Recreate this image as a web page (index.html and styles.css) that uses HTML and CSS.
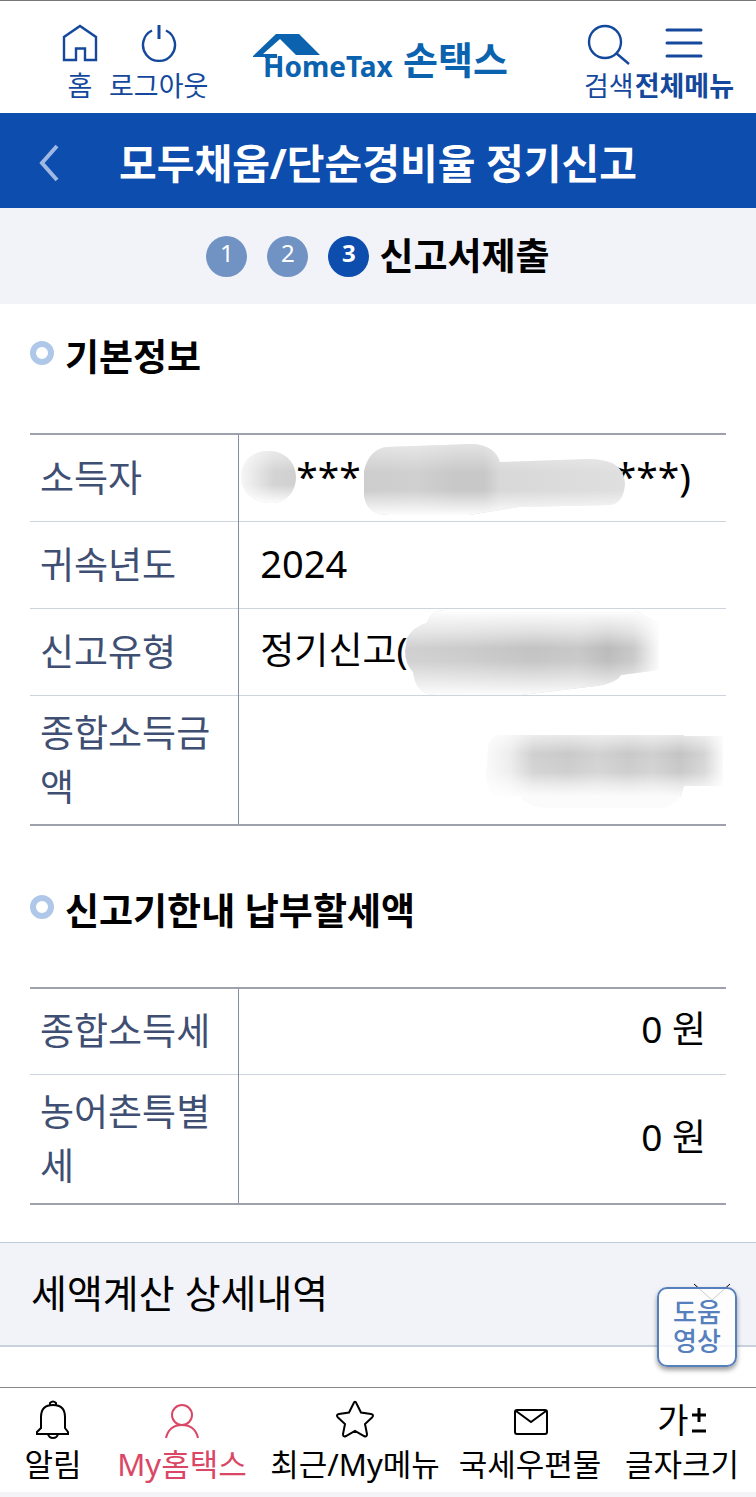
FILE: index.html
```html
<!DOCTYPE html>
<html lang="ko">
<head>
    <meta charset="UTF-8">
    <meta name="viewport" content="width=device-width, initial-scale=1.0">
    <title>손택스</title>
    <link rel="stylesheet" href="styles.css">
</head>
<body>
    <header class="top">
        <button class="top-btn">
            <svg width="38" height="38" viewBox="0 0 38 38"><path d="M3 36V13L19 2l16 11v23H24V24.500h-9V36z"/></svg>
            <span>홈</span>
        </button>
        <button class="top-btn">
            <svg width="38" height="38" viewBox="0 0 38 38"><path d="M12 6.500a16 16 0 1 0 14 0"/><path d="M19 1v14" stroke-width="3"/></svg>
            <span>로그아웃</span>
        </button>
        <a class="logo" href="#">
            <svg width="262" height="56" viewBox="0 0 262 56">
                <path d="M0 23L23 1H46L67 22H43L27 6 10 21H24V25H12V24H0z"/>
                <text class="logo-en" x="10" y="44">HomeTax</text>
                <text class="logo-ko" x="150" y="41">손택스</text>
            </svg>
        </a>
        <div class="top-right">
            <button class="top-btn search">
                <svg width="44" height="42" viewBox="0 0 44 42"><circle cx="18" cy="18" r="16"/><path d="M29 29l13 11"/></svg>
                <span>검색</span>
            </button>
            <button class="top-btn all">
                <svg width="38" height="38" viewBox="0 0 38 38"><path d="M2 6h34M2 19h34M2 32h34" stroke-width="3" stroke-linecap="round"/></svg>
                <span>전체메뉴</span>
            </button>
        </div>
    </header>

    <div class="title-bar">
        <button class="back" aria-label="이전"><svg width="24" height="40" viewBox="0 0 24 40"><path d="M21 3L6 20l15 17"/></svg></button>
        <h1>모두채움/단순경비율 정기신고</h1>
    </div>

    <div class="steps">
        <span class="step">1</span>
        <span class="step">2</span>
        <span class="step on">3</span>
        <strong>신고서제출</strong>
    </div>

    <main>
        <section>
            <h2>기본정보</h2>
            <table>
                <tr>
                    <th scope="row">소득자</th>
                    <td class="masked">
                        <div class="mask-line"><span>***</span><span>***)</span></div>
                        <svg class="smudge" width="390" height="76" viewBox="0 0 390 76">
                            <defs>
                                <linearGradient id="g1"><stop offset="0" stop-color="#f6f6f6"/><stop offset=".6" stop-color="#d4d4d4"/><stop offset="1" stop-color="#d0d0d0"/></linearGradient>
                                <linearGradient id="g2"><stop offset="0" stop-color="#cdcdcd"/><stop offset=".2" stop-color="#d0d0d0"/><stop offset=".35" stop-color="#c8c8c8"/><stop offset=".46" stop-color="#c8c8c8"/><stop offset=".52" stop-color="#d8d8d8"/><stop offset="1" stop-color="#dfdfdf"/></linearGradient>
                                <linearGradient id="fade" x2="0" y2="1"><stop offset="0" stop-color="#fff" stop-opacity=".5"/><stop offset=".4" stop-color="#fff" stop-opacity="0"/><stop offset=".65" stop-color="#fff" stop-opacity="0"/><stop offset="1" stop-color="#fff" stop-opacity=".95"/></linearGradient>
                            </defs>
                            <path fill="url(#g1)" d="M2 32C3 15 17 7 31 8 47 9 57 20 57 34 57 50 46 60 32 60 15 60 1 50 2 32z"/>
                            <path fill="url(#fade)" d="M2 32C3 15 17 7 31 8 47 9 57 20 57 34 57 50 46 60 32 60 15 60 1 50 2 32z"/>
                            <path fill="url(#g2)" d="M125 28Q130 6 148 4L235 1Q256 3 261 19L350 16Q386 16 386 42 384 61 370 62L280 64 230 72H150Q127 72 125 52z"/>
                            <path fill="url(#fade)" d="M125 28Q130 6 148 4L235 1Q256 3 261 19L350 16Q386 16 386 42 384 61 370 62L280 64 230 72H150Q127 72 125 52z"/>
                        </svg>
                    </td>
                </tr>
                <tr>
                    <th scope="row">귀속년도</th>
                    <td class="year">2024</td>
                </tr>
                <tr>
                    <th scope="row">신고유형</th>
                    <td class="masked">
                        정기신고(
                        <svg class="smudge type" width="260" height="92" viewBox="0 0 260 92">
                            <defs>
                                <linearGradient id="g3"><stop offset="0" stop-color="#d0d0d0"/><stop offset=".25" stop-color="#cbcbcb"/><stop offset=".5" stop-color="#c3c3c3"/><stop offset=".68" stop-color="#c8c8c8"/><stop offset=".8" stop-color="#bbb"/><stop offset=".9" stop-color="#c9c9c9"/><stop offset="1" stop-color="#fbfbfb"/></linearGradient>
                                <linearGradient id="fade2" x2="0" y2="1"><stop offset="0" stop-color="#fff"/><stop offset=".25" stop-color="#fff" stop-opacity=".5"/><stop offset=".45" stop-color="#fff" stop-opacity="0"/><stop offset=".6" stop-color="#fff" stop-opacity=".05"/><stop offset="1" stop-color="#fff" stop-opacity=".95"/></linearGradient>
                            </defs>
                            <path fill="url(#g3)" d="M6 32Q12 21 26 17 30 5 42 4H235Q246 12 258 17V64L220 69Q215 77 195 80L120 89H35Q15 89 12 66 4 58 4 45z"/>
                            <path fill="url(#fade2)" d="M6 32Q12 21 26 17 30 5 42 4H235Q246 12 258 17V64L220 69Q215 77 195 80L120 89H35Q15 89 12 66 4 58 4 45z"/>
                        </svg>
                    </td>
                </tr>
                <tr>
                    <th scope="row">종합소득금액</th>
                    <td class="masked">
                        <svg class="smudge amount" width="244" height="76" viewBox="0 0 244 76">
                            <defs>
                                <linearGradient id="g4"><stop offset="0" stop-color="#fafafa"/><stop offset=".1" stop-color="#ededed"/><stop offset=".2" stop-color="#d0d0d0"/><stop offset=".35" stop-color="#cacaca"/><stop offset=".47" stop-color="#d2d2d2"/><stop offset=".6" stop-color="#c9c9c9"/><stop offset=".7" stop-color="#d0d0d0"/><stop offset=".82" stop-color="#c4c4c4"/><stop offset=".92" stop-color="#d5d5d5"/><stop offset="1" stop-color="#fafafa"/></linearGradient>
                                <linearGradient id="fade3" x2="0" y2="1"><stop offset="0" stop-color="#fff" stop-opacity=".6"/><stop offset=".3" stop-color="#fff" stop-opacity="0"/><stop offset=".6" stop-color="#fff" stop-opacity=".1"/><stop offset=".8" stop-color="#fff" stop-opacity=".6"/><stop offset="1" stop-color="#fff" stop-opacity=".95"/></linearGradient>
                            </defs>
                            <path fill="#fbfbfb" d="M40 60H200Q192 75 175 75H65Q50 75 40 66z"/>
                            <path fill="url(#g4)" d="M6 14Q8 2 20 2H202V3H241V53H202L198 64H16Q6 60 4 44z"/>
                            <path fill="url(#fade3)" d="M6 14Q8 2 20 2H202V3H241V53H202L198 64H16Q6 60 4 44z"/>
                        </svg>
                    </td>
                </tr>
            </table>
        </section>

        <section>
            <h2>신고기한내 납부할세액</h2>
            <table>
                <tr>
                    <th scope="row">종합소득세</th>
                    <td class="won">0 원</td>
                </tr>
                <tr>
                    <th scope="row">농어촌특별세</th>
                    <td class="won">0 원</td>
                </tr>
            </table>
        </section>
    </main>

    <div class="detail">
        <button class="detail-btn">
            세액계산 상세내역
            <svg width="38" height="20" viewBox="0 0 38 20"><path d="M1 1l18 16L37 1"/></svg>
        </button>
        <button class="help">도움<br>영상</button>
    </div>

    <nav class="bottom">
        <a href="#">
            <svg width="40" height="40" viewBox="0 0 40 40"><path d="M8 28V17Q8 5 20 5T32 17V28l3 4v2H4v-2zM17 5V3q3-3 6 0v2M15 34q1 4 5 4t5-4"/></svg>
            알림
        </a>
        <a class="on" href="#">
            <svg width="40" height="40" viewBox="0 0 40 40"><circle cx="20" cy="15" r="10"/><path d="M4 38Q7 25 20 25T36 38"/></svg>
            My홈택스
        </a>
        <a href="#">
            <svg width="40" height="40" viewBox="0 0 40 40"><path d="M18.500 3.500Q20 0 21.500 3.500L26 12.500 36 14Q39.500 15 37 17.500L30 24 32 34Q32 37.500 29 36L20 31 11 36Q8 37.500 8 34L10 24 3 17.500Q.5 15 4 14L14 12.500z"/></svg>
            최근/My메뉴
        </a>
        <a href="#">
            <svg width="40" height="40" viewBox="0 0 40 40"><rect x="5" y="10" width="32" height="24" rx="2"/><path d="M6 11l15 11 15-11"/></svg>
            국세우편물
        </a>
        <a href="#">
            <span class="font-size">가<svg width="16" height="28" viewBox="0 0 16 28"><path d="M1 9h14M8 2v14M1 25h14" stroke-width="3"/></svg></span>
            글자크기
        </a>
    </nav>
</body>
</html>
```
FILE: styles.css
```css
*,
*::before {
    box-sizing: border-box;
}

body {
    margin: 0;
    font-family: "Noto Sans", "Noto Sans CJK KR", sans-serif;
    font-size: 37px;
    line-height: 54px;
    color: #000;
    background: #fff;
}

button {
    padding: 0;
    border: none;
    background: none;
    font: inherit;
    color: inherit;
    cursor: pointer;
}

a {
    color: inherit;
    text-decoration: none;
}

svg {
    display: block;
    fill: none;
    stroke: currentColor;
    stroke-width: 2;
}

h1,
h2 {
    margin: 0;
}

/* header */
.top {
    display: flex;
    align-items: flex-start;
    gap: 10px;
    height: 113px;
    padding: 23px 22px 0 61px;
    border-top: 1px solid #777;
    color: #14489c;
}

.top-btn {
    display: flex;
    flex-direction: column;
    align-items: center;
    font-size: 27px;
    line-height: 40px;
    white-space: nowrap;
}

.top-btn svg {
    height: 42px;
    padding-bottom: 4px;
    stroke-width: 2.4;
}

.search svg {
    padding-bottom: 0;
}

.logo {
    margin: 9px 0 0 35px;
}

.logo svg {
    fill: #0b62ae;
    stroke: none;
}

.logo-en {
    font-size: 28px;
    font-weight: 700;
}

.logo-ko {
    font-size: 38px;
    font-weight: 700;
}

.top-right {
    display: flex;
    gap: 1px;
    margin-left: auto;
}

.all {
    font-weight: 700;
}

.title-bar {
    position: relative;
    padding: 23px 60px 18px;
    background: #0d4dae;
    color: #fff;
    text-align: center;
}

.title-bar h1 {
    font-size: 41px;
}

.back {
    position: absolute;
    left: 36px;
    top: 30px;
    color: #9fb9e3;
}

.back svg {
    stroke-width: 4;
}

.steps {
    display: flex;
    justify-content: center;
    align-items: center;
    gap: 20px;
    padding: 21px 0;
    background: #f2f3f8;
}

.step {
    width: 41px;
    height: 41px;
    border-radius: 50%;
    background: #7193c3;
    color: #fff;
    font-size: 24px;
    line-height: 34px;
    text-align: center;
}

.step.on {
    background: #0d4dae;
    font-weight: 700;
}

.steps strong {
    margin-left: -10px;
}

/* content */
main {
    padding: 0 30px;
}

section {
    padding: 26px 0 32px;
}

h2 {
    display: flex;
    align-items: center;
    gap: 11px;
    margin-bottom: 49px;
    font-size: 37px;
}

h2::before {
    content: "";
    width: 24px;
    height: 24px;
    margin-bottom: 8px;
    border: 6px solid #afc7e8;
    border-radius: 50%;
}

table {
    width: 100%;
    border-collapse: collapse;
    table-layout: fixed;
    border-top: 2px solid #9da1ac;
    border-bottom: 2px solid #9da1ac;
}

tr {
    height: 87px;
}

tr + tr {
    border-top: 1px solid #ccd4dd;
}

th {
    width: 30%;
    padding: 10px;
    border-right: 1px solid #858da0;
    color: #3f4f73;
    font-weight: 400;
    text-align: left;
    word-break: break-all;
}

td {
    padding: 8px 20px 12px 21px;
}

.year {
    font-size: 38px;
}

.won {
    text-align: right;
}

/* masked values */
.masked {
    position: relative;
}

.mask-line {
    display: flex;
    justify-content: space-between;
    padding: 0 15px 0 36px;
    font-size: 39px;
}

.smudge {
    position: absolute;
    left: 0;
    top: 8px;
    stroke: none;
}

.smudge.type {
    left: 162px;
    top: -3px;
}

.smudge.amount {
    left: auto;
    right: 0;
    top: 37px;
}

/* detail */
.detail {
    position: relative;
    margin-top: 5px;
    padding-bottom: 40px;
}

.detail-btn {
    display: flex;
    justify-content: space-between;
    align-items: center;
    width: 100%;
    padding: 23px 25px 25px 31px;
    border-top: 1px solid #bdc9d8;
    border-bottom: 2px solid #c9d1de;
    background: #f2f3f8;
    font-size: 39px;
}

.detail-btn svg {
    stroke-width: 1;
}

.help {
    position: absolute;
    right: 19px;
    top: 45px;
    width: 80px;
    height: 80px;
    border: 2px solid #5580bd;
    border-radius: 10px;
    background: rgba(255, 255, 255, 0.8);
    box-shadow: 0 3px 5px rgba(0, 0, 0, 0.4);
    color: #5580bd;
    font-size: 26px;
    font-weight: 500;
    line-height: 29px;
}

/* bottom menu */
.bottom {
    display: grid;
    grid-template-columns: 106fr 152fr 194fr 156fr 148fr;
    padding: 12px 0 3px;
    border-top: 1px solid #888;
    border-bottom: 6px solid #f4f4f7;
    font-size: 31px;
    line-height: 49px;
    white-space: nowrap;
}

.bottom a {
    display: flex;
    flex-direction: column;
    align-items: center;
}

.bottom .on {
    color: #da4766;
}

.font-size {
    display: flex;
    align-items: center;
    gap: 2px;
    height: 40px;
    font-size: 34px;
}
```
